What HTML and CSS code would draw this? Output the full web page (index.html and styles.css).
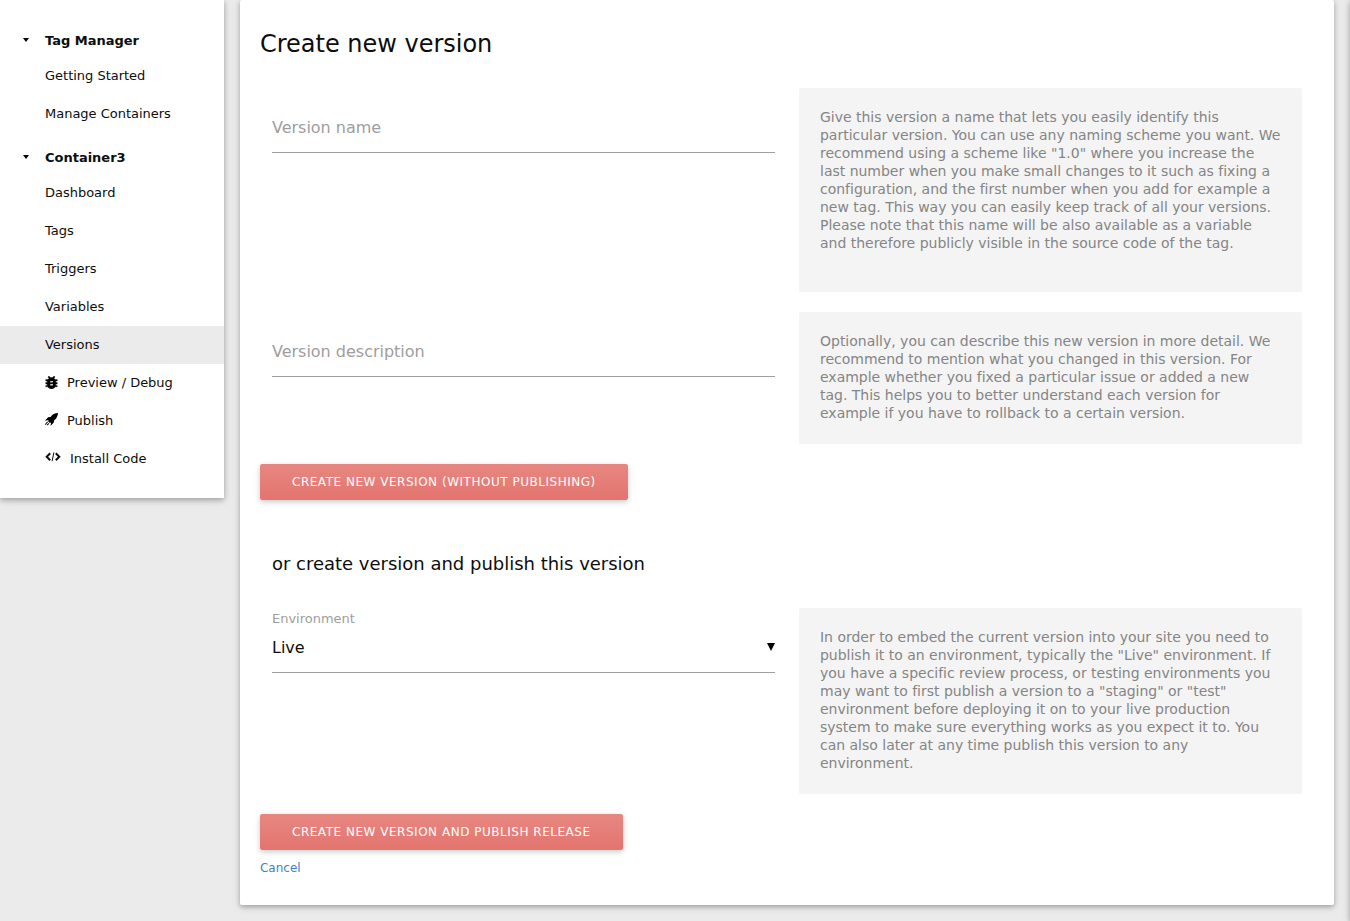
FILE: index.html
```html
<!DOCTYPE html>
<html lang="en">
<head>
<meta charset="utf-8">
<title>Create new version</title>
<link rel="stylesheet" href="styles.css">
</head>
<body>
<div class="page">
  <nav class="sidebar">
    <section class="group">
      <h3 class="group-title"><svg class="caret" viewBox="0 0 6 4"><path d="M0 0h6L3 4z"/></svg>Tag Manager</h3>
      <a class="item">Getting Started</a>
      <a class="item">Manage Containers</a>
    </section>
    <section class="group">
      <h3 class="group-title"><svg class="caret" viewBox="0 0 6 4"><path d="M0 0h6L3 4z"/></svg>Container3</h3>
      <a class="item">Dashboard</a>
      <a class="item">Tags</a>
      <a class="item">Triggers</a>
      <a class="item">Variables</a>
      <a class="item active">Versions</a>
      <a class="item"><svg class="icon bug" viewBox="4 3 16 18"><path d="M14 12H10V10H14M14 16H10V14H14M20 8H17.19C16.74 7.22 16.12 6.55 15.37 6.04L17 4.41 15.59 3 13.42 5.17C12.96 5.06 12.5 5 12 5S11.04 5.06 10.59 5.17L8.41 3 7 4.41 8.62 6.04C7.88 6.55 7.26 7.22 6.81 8H4V10H6.09C6.04 10.33 6 10.66 6 11V12H4V14H6V15C6 15.34 6.04 15.67 6.09 16H4V18H6.81C7.85 19.79 9.78 21 12 21S16.15 19.79 17.19 18H20V16H17.91C17.96 15.67 18 15.34 18 15V14H20V12H18V11C18 10.66 17.96 10.33 17.91 10H20V8Z"/></svg>Preview / Debug</a>
      <a class="item"><svg class="icon" viewBox="0 0 16 16"><path d="M16 0C12 .2 9 1.700 6.800 4.800L3.800 5.200 0 9.500l4.300-.9L3.800 10.300 5.900 12.300 7.500 11.700 6.800 16l4-4.200.6-2.800C14 7 15.800 4 16 0z"/><path d="M3.200 10.800 .3 14.500M4.900 12.700 2.500 15" stroke="#0d0d0d" stroke-width="1.300"/></svg>Publish</a>
      <a class="item"><svg class="icon wide" viewBox="0 0 16 10"><path class="stroke" d="M5.200 1.300 1.700 4.800 5.200 8.300M10.800 1.300l3.500 3.500L10.800 8.300"/><path class="stroke thin" d="M8.900.4 7.100 9.200"/></svg>Install Code</a>
    </section>
  </nav>
  <main class="card">
    <h1 class="title">Create new version</h1>
    <div class="row">
      <div class="field"><div class="input empty">Version name</div></div>
      <p class="help spacious">Give this version a name that lets you easily identify this particular version. You can use any naming scheme you want. We recommend using a scheme like "1.0" where you increase the last number when you make small changes to it such as fixing a configuration, and the first number when you add for example a new tag. This way you can easily keep track of all your versions. Please note that this name will be also available as a variable and therefore publicly visible in the source code of the tag.</p>
    </div>
    <div class="row">
      <div class="field"><div class="input empty">Version description</div></div>
      <p class="help">Optionally, you can describe this new version in more detail. We recommend to mention what you changed in this version. For example whether you fixed a particular issue or added a new tag. This helps you to better understand each version for example if you have to rollback to a certain version.</p>
    </div>
    <button class="btn">Create new version (without publishing)</button>
    <h2 class="subtitle">or create version and publish this version</h2>
    <div class="row">
      <div class="field select">
        <div class="label">Environment</div>
        <div class="input">Live<svg class="arrow" viewBox="0 0 8 8"><path d="M0 0h8L4 8z"/></svg></div>
      </div>
      <p class="help">In order to embed the current version into your site you need to publish it to an environment, typically the "Live" environment. If you have a specific review process, or testing environments you may want to first publish a version to a "staging" or "test" environment before deploying it on to your live production system to make sure everything works as you expect it to. You can also later at any time publish this version to any environment.</p>
    </div>
    <button class="btn">Create new version and publish release</button>
    <a class="cancel">Cancel</a>
  </main>
  <aside class="drawer"></aside>
</div>
</body>
</html>
```
FILE: styles.css
```css
* { box-sizing: border-box; }
body {
  margin: 0;
  background: #ebebeb;
  color: #0d0d0d;
  font-family: "DejaVu Sans", sans-serif;
  letter-spacing: -.012px;
}
h1, h2, h3, p { margin: 0; font-weight: 400; }
.page {
  position: relative;
  display: flex;
  align-items: flex-start;
  gap: 16px;
  width: 1350px;
  height: 921px;
  overflow: hidden;
}
.sidebar, .card, .drawer {
  background: #fff;
  box-shadow: 0 2px 5px 0 rgba(0,0,0,.26), 0 2px 10px 0 rgba(0,0,0,.1);
}
.drawer { position: absolute; left: 100%; top: 0; width: 240px; height: 100%; }
.sidebar { width: 224px; padding: 26px 0 20px; font-size: 13px; }
.group + .group { margin-top: 10px; }
.group-title {
  display: flex;
  align-items: center;
  height: 31px;
  padding: 0 0 2px 22.5px;
  font-size: 13px;
  font-weight: 700;
}
.caret { width: 6px; height: 4px; margin: 0 16.5px 1px 0; }
.item {
  display: flex;
  align-items: center;
  height: 38px;
  padding: 0 0 2px 45px;
}
.active { background: #ebebeb; }
.icon { width: 13px; height: 13px; margin: 0 9px 1px 0; }
.icon.bug { margin-bottom: 0; stroke: #0d0d0d; stroke-width: .5; }
.icon.wide { width: 16px; height: 10px; margin-bottom: 2px; }
.stroke { fill: none; stroke: #0d0d0d; stroke-width: 2; }
.thin { stroke-width: 1; }
.card {
  width: 1094px;
  height: 905px;
  padding: 30px 20px 0;
  border-radius: 2px;
}
.title { height: 58px; font-size: 24px; line-height: 29px; }
.row {
  display: grid;
  grid-template-columns: 503px 503px;
  gap: 24px;
  margin: 0 0 20px 12px;
}
.input {
  display: flex;
  align-items: center;
  justify-content: space-between;
  height: 50px;
  border-bottom: 1px solid #9e9e9e;
  font-size: 16px;
}
.empty { margin-top: 15px; color: #9e9e9e; }
.label { height: 15px; padding-top: 3px; color: #9e9e9e; font-size: 13px; line-height: 15px; }
.arrow { width: 8px; height: 8px; margin-bottom: 2px; }
.help {
  padding: 20px 21px 22px;
  border-radius: 2px;
  background: #f4f4f4;
  color: #858585;
  font-size: 14px;
  line-height: 18px;
}
.spacious { padding-bottom: 40px; }
.btn {
  display: block;
  height: 36px;
  padding: 0 32px;
  border: 0;
  border-radius: 2px;
  background: linear-gradient(#e78781, #e4746e);
  box-shadow: 0 2px 5px 0 rgba(0,0,0,.16), 0 2px 10px 0 rgba(0,0,0,.06);
  color: #fff;
  font: 12px "DejaVu Sans", sans-serif;
  letter-spacing: .52px;
  text-transform: uppercase;
}
.subtitle { height: 108px; padding: 53px 0 0 12px; font-size: 18px; line-height: 22px; }
.cancel { display: block; margin-top: 10px; color: #4183c4; font-size: 12px; line-height: 16px; }
```
